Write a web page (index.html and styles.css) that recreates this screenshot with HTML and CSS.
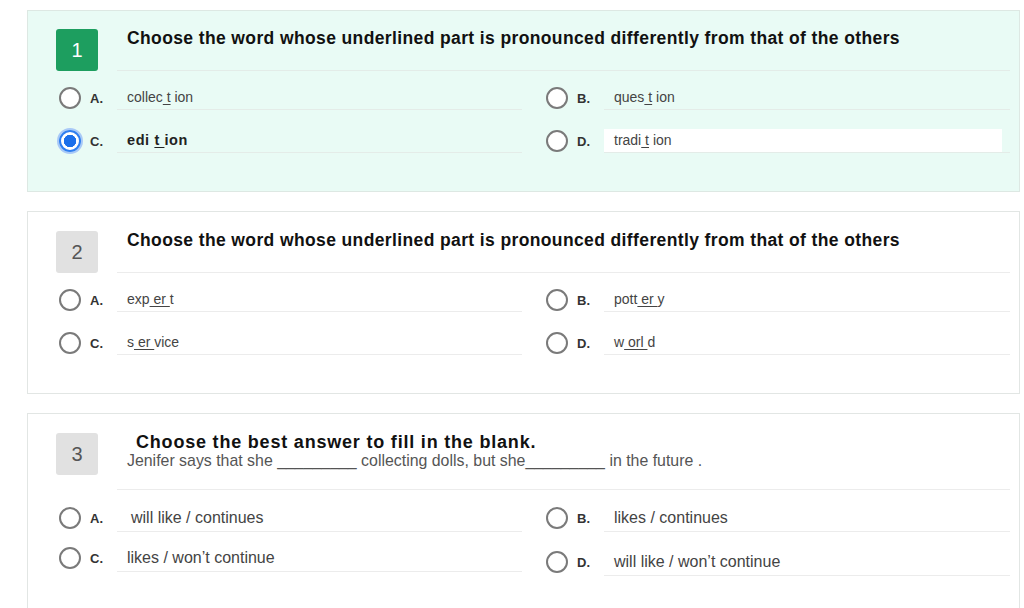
FILE: index.html
```html
<!DOCTYPE html>
<html>
<head>
<meta charset="utf-8">
<link rel="stylesheet" href="styles.css">
</head>
<body>
<div class="page">

  <section class="card card-done">
    <div class="head">
      <div class="badge badge-green">1</div>
      <div class="qtitle"><div class="qtext">Choose the word whose underlined part is pronounced differently from that of the others</div></div>
    </div>
    <div class="opts">
      <div class="opt"><span class="radio"></span><span class="lbl">A.</span><span class="otext">collec<u> t</u> ion</span></div>
      <div class="opt"><span class="radio"></span><span class="lbl">B.</span><span class="otext">ques<u> t</u> ion</span></div>
      <div class="opt"><span class="radio radio-on"></span><span class="lbl">C.</span><span class="otext otext-sel">edi <u>t </u>ion</span></div>
      <div class="opt"><span class="radio"></span><span class="lbl">D.</span><span class="otext otext-hl">tradi<u> t</u> ion</span></div>
    </div>
  </section>

  <section class="card card-2">
    <div class="head">
      <div class="badge">2</div>
      <div class="qtitle"><div class="qtext">Choose the word whose underlined part is pronounced differently from that of the others</div></div>
    </div>
    <div class="opts">
      <div class="opt"><span class="radio"></span><span class="lbl">A.</span><span class="otext">exp<u> er </u>t</span></div>
      <div class="opt"><span class="radio"></span><span class="lbl">B.</span><span class="otext">pott<u> er </u>y</span></div>
      <div class="opt"><span class="radio"></span><span class="lbl">C.</span><span class="otext">s<u> er </u>vice</span></div>
      <div class="opt"><span class="radio"></span><span class="lbl">D.</span><span class="otext">w<u> orl </u>d</span></div>
    </div>
  </section>

  <section class="card card-3">
    <div class="head">
      <div class="badge">3</div>
      <div class="qtitle qtitle-tall">
        <div class="qtext qtext-big">Choose the best answer to fill in the blank.</div>
        <div class="qsub">Jenifer says that she <span class="blank">_________</span> collecting dolls, but she<span class="blank">_________</span> in the future .</div>
      </div>
    </div>
    <div class="opts opts-big">
      <div class="opt"><span class="radio"></span><span class="lbl">A.</span><span class="otext otext-in">will like / continues</span></div>
      <div class="opt"><span class="radio"></span><span class="lbl">B.</span><span class="otext">likes / continues</span></div>
      <div class="opt"><span class="radio"></span><span class="lbl">C.</span><span class="otext">likes / won’t continue</span></div>
      <div class="opt opt-low"><span class="radio"></span><span class="lbl">D.</span><span class="otext">will like / won’t continue</span></div>
    </div>
  </section>

</div>
</body>
</html>
```

FILE: styles.css
```css
* { box-sizing: border-box; }

html, body {
  margin: 0;
  padding: 0;
  background: #ffffff;
  font-family: "Liberation Sans", Arial, sans-serif;
  color: #333;
}

.page {
  padding: 10px 4px 0 27px;
  display: flex;
  flex-direction: column;
  gap: 19px;
}

.card {
  border: 1px solid #e2e6e4;
  background: #ffffff;
  padding: 18px 9px 0 28px;
}

.card-done {
  background: #e9fbf5;
  border-color: #dde8e3;
  height: 182px;
}

.card-2 {
  height: 183px;
  padding-top: 19px;
}

.card-3 {
  height: 220px;
  padding-top: 19px;
}

.head {
  display: grid;
  grid-template-columns: 42px 1fr;
  column-gap: 19px;
}

.badge {
  width: 42px;
  height: 42px;
  border-radius: 3px;
  background: #e1e1e1;
  color: #555;
  font-size: 20px;
  display: flex;
  align-items: center;
  justify-content: center;
}

.badge-green {
  background: #1d9e5f;
  color: #ffffff;
}

.qtitle {
  height: 42px;
  padding: 0 10px;
  border-bottom: 1px solid #e3ece8;
}

.card-2 .qtitle, .card-3 .qtitle { border-bottom-color: #ececec; }

.qtitle-tall { height: 57px; }

.qtext {
  font-weight: bold;
  font-size: 17.5px;
  line-height: 18px;
  color: #111;
  letter-spacing: 0.38px;
  white-space: nowrap;
}

.qtext-big {
  font-size: 18px;
  padding-left: 9px;
  letter-spacing: 0.8px;
  line-height: 19px;
  padding-top: 0;
}

.qsub {
  font-size: 15.9px;
  line-height: 17px;
  color: #555;
  white-space: nowrap;
}

.blank { color: #555; }

.opts {
  display: grid;
  grid-template-columns: 463px 464px;
  column-gap: 24px;
  row-gap: 21px;
  margin-left: 3px;
  padding-top: 16px;
}

.opts-big {
  padding-top: 17px;
  row-gap: 18px;
}

.opt {
  display: flex;
  align-items: center;
  height: 22px;
}

.opt-low { margin-top: 4px; }

.radio {
  width: 22px;
  height: 22px;
  flex: none;
  border-radius: 50%;
  border: 2px solid #7a7a7a;
  background: #ffffff;
  margin-right: 9px;
}

.radio-on {
  border: 2px solid #2f7ef0;
  background: radial-gradient(circle, #1b6fea 0 6px, #ffffff 6.5px);
  box-shadow: 0 0 0 2px #a9c9f7;
}

.lbl {
  width: 27px;
  flex: none;
  font-size: 13px;
  font-weight: bold;
  color: #333;
}

.otext {
  flex: 1;
  font-size: 14px;
  line-height: 18px;
  color: #444;
  padding: 2px 10px 3px;
  border-bottom: 1px solid #e4ece8;
  white-space: pre;
}

.card-2 .otext, .card-3 .otext { border-bottom-color: #ececec; }

.otext-sel {
  font-weight: bold;
  color: #222;
  font-size: 14.5px;
  letter-spacing: 0.6px;
}

.otext-hl {
  background: linear-gradient(to right, #ffffff calc(100% - 8px), transparent calc(100% - 8px));
}

.opts-big .otext {
  font-size: 16px;
  padding-top: 4px;
  padding-bottom: 4px;
}

.otext-in { padding-left: 14px !important; }

u {
  text-decoration: underline;
  text-underline-offset: 2px;
}
```
